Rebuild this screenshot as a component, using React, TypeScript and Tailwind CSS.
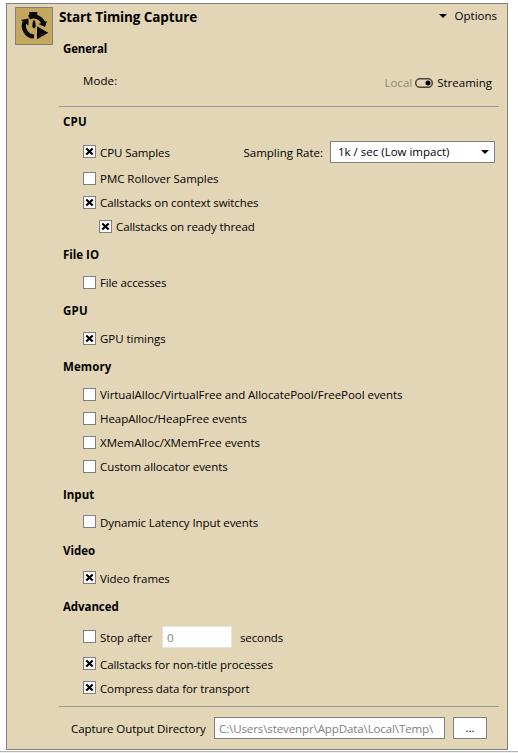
import React from 'react';

const FONT = "font-['Open_Sans','Noto_Sans',sans-serif]";

function Box({ on, low }: { on?: boolean; low?: boolean }) {
  return (
    <span className={`block size-[13px] shrink-0 border border-[#808080] bg-white ${low ? 'mt-1.5' : 'mt-[5px]'}`}>
      {on && (
        <svg viewBox="0 0 11 11" className="block size-[11px]" fill="none" stroke="#000" strokeWidth="2.200">
          <path d="M2.300 2.500L8.700 8.500M8.700 2.500L2.300 8.500" />
        </svg>
      )}
    </span>
  );
}

type RowProps = { text: string; on?: boolean; low?: boolean; indent?: boolean; track?: string };

function Row({ text, on, low, indent, track = 'tracking-[-0.03px]' }: RowProps) {
  return (
    <label className={`flex h-6 items-start gap-1 leading-[26px] ${indent ? 'pl-[92px]' : 'pl-[76px]'}`}>
      <Box on={on} low={low} />
      <span className={track}>{text}</span>
    </label>
  );
}

function Heading({ text, track = '' }: { text: string; track?: string }) {
  return <h2 className={`h-8 pt-1 pl-14 font-bold leading-[26px] ${track}`}>{text}</h2>;
}

function Caret() {
  return (
    <svg viewBox="0 0 8 4" className="h-1 w-2">
      <path d="M0 0H8L4 4Z" fill="#000" />
    </svg>
  );
}

function TimerIcon() {
  return (
    <span className="block size-[38px] border border-[#808080] bg-[#c4a75f]">
      <svg viewBox="0 0 36 36" className="size-9" fill="#0a0a0a">
        <g fill="none" stroke="#0a0a0a" strokeWidth="4.200">
          <path d="M18 28.500A10.500 10.500 0 0 1 9.500 12.500" />
          <path d="M13 9.500A10.500 10.500 0 0 1 27.300 15" />
        </g>
        <path d="M5 12L12.500 10.500L12.500 17.500ZM22.500 16L31 13L29 19ZM13.300 4H21.300V8H13.300ZM17 12.500H19L19.800 18.500L18 20.800L16.200 18.500ZM21 18.300L32.300 24.800L21 31.300Z" />
      </svg>
    </span>
  );
}

export default function App() {
  return (
    <div className={`h-[753px] w-[518px] overflow-hidden bg-white text-[11.5px] whitespace-nowrap text-black ${FONT}`}>
      <div className="border-b border-[#b4b4b4] pt-[3px] pb-px pl-1.5">
        <main className="h-[747px] w-[502px] border border-[#808080] bg-[#e3d6b6]">
          <header className="flex h-[38px] items-start pt-[3px] pl-2">
            <TimerIcon />
            <h1 className="pl-1.5 text-[13.5px] font-bold leading-5 tracking-[-0.12px]">Start Timing Capture</h1>
            <button className="ml-auto flex items-center gap-2 pr-[10px] leading-[18px]">
              <Caret />
              <span>Options</span>
            </button>
          </header>
          <section className="h-[74px]">
            <div className="-mt-[10px]">
              <Heading text="General" track="tracking-[-0.15px]" />
            </div>
            <div className="flex h-[34px] items-center pl-[76px] pr-[15px]">
              <span className="tracking-[0.1px]">Mode:</span>
              <span className="ml-auto flex items-center pt-1">
                <span className="text-[#8b8780]">Local</span>
                <svg viewBox="0 0 18 10" className="mr-1 ml-[3px] h-2.5 w-[18px]">
                  <rect x="0.700" y="0.700" width="16.600" height="8.600" rx="4.300" fill="none" stroke="#4a473c" strokeWidth="1.500" />
                  <circle cx="13" cy="5" r="2.500" />
                </svg>
                <span>Streaming</span>
              </span>
            </div>
          </section>
          <hr className="ml-[52px] w-[440px] border-[#9a9a9a]" />
          <section>
            <div className="-mt-[2px]">
              <Heading text="CPU" track="tracking-[0.2px]" />
            </div>
            <div className="flex h-[29px] items-start pt-[3px]">
              <Row text="CPU Samples" on track="tracking-[-0.08px]" />
              <span className="ml-auto mr-[7px] leading-[26px]">Sampling Rate:</span>
              <span className="mt-px mr-3 flex h-[22px] w-[165px] items-center justify-between border border-[#808080] bg-white pr-[5px] pl-[7px] leading-[22px]">
                <span>1k / sec (Low impact)</span>
                <Caret />
              </span>
            </div>
            <Row text="PMC Rollover Samples" low track="tracking-[-0.04px]" />
            <Row text="Callstacks on context switches" on low track="tracking-[-0.1px]" />
            <Row text="Callstacks on ready thread" on low indent track="tracking-[-0.11px]" />
          </section>
          <Heading text="File IO" />
          <Row text="File accesses" low track="tracking-[-0.13px]" />
          <Heading text="GPU" track="tracking-[0.2px]" />
          <Row text="GPU timings" on low />
          <Heading text="Memory" track="tracking-[0.1px]" />
          <Row text="VirtualAlloc/VirtualFree and AllocatePool/FreePool events" low track="tracking-[-0.05px]" />
          <Row text="HeapAlloc/HeapFree events" low track="tracking-[-0.05px]" />
          <Row text="XMemAlloc/XMemFree events" low track="tracking-[0.01px]" />
          <Row text="Custom allocator events" low track="tracking-[-0.08px]" />
          <Heading text="Input" />
          <Row text="Dynamic Latency Input events" track="tracking-[-0.09px]" />
          <Heading text="Video" />
          <Row text="Video frames" on track="tracking-[-0.08px]" />
          <Heading text="Advanced" track="tracking-[-0.08px]" />
          <div className="flex h-[30px] items-start pt-[3px]">
            <div className="w-[155px]">
              <Row text="Stop after" track="tracking-[-0.08px]" />
            </div>
            <span className="mt-px h-[22px] w-[70px] border border-[#e3e3e3] bg-white px-1 leading-[22px] text-[#808080]">0</span>
            <span className="pl-2 leading-[26px] tracking-[-0.12px]">seconds</span>
          </div>
          <Row text="Callstacks for non-title processes" on track="tracking-[-0.08px]" />
          <Row text="Compress data for transport" on track="tracking-[-0.12px]" />
          <hr className="mt-1.5 ml-[52px] w-[440px] border-[#9a9a9a]" />
          <footer className="flex pt-2.5 pl-16 leading-6">
            <span className="w-[143px] tracking-[-0.08px]">Capture Output Directory</span>
            <span className="h-[22px] w-[231px] border border-[#808080] bg-white pl-1 leading-[22px] tracking-[-0.1px] text-[#808080]">C:\Users\stevenpr\AppData\Local\Temp\</span>
            <button className="ml-2 h-[22px] w-[34px] border border-[#808080] bg-white leading-5">...</button>
          </footer>
        </main>
      </div>
      <div className="h-px bg-[#f0f0f0]" />
    </div>
  );
}
